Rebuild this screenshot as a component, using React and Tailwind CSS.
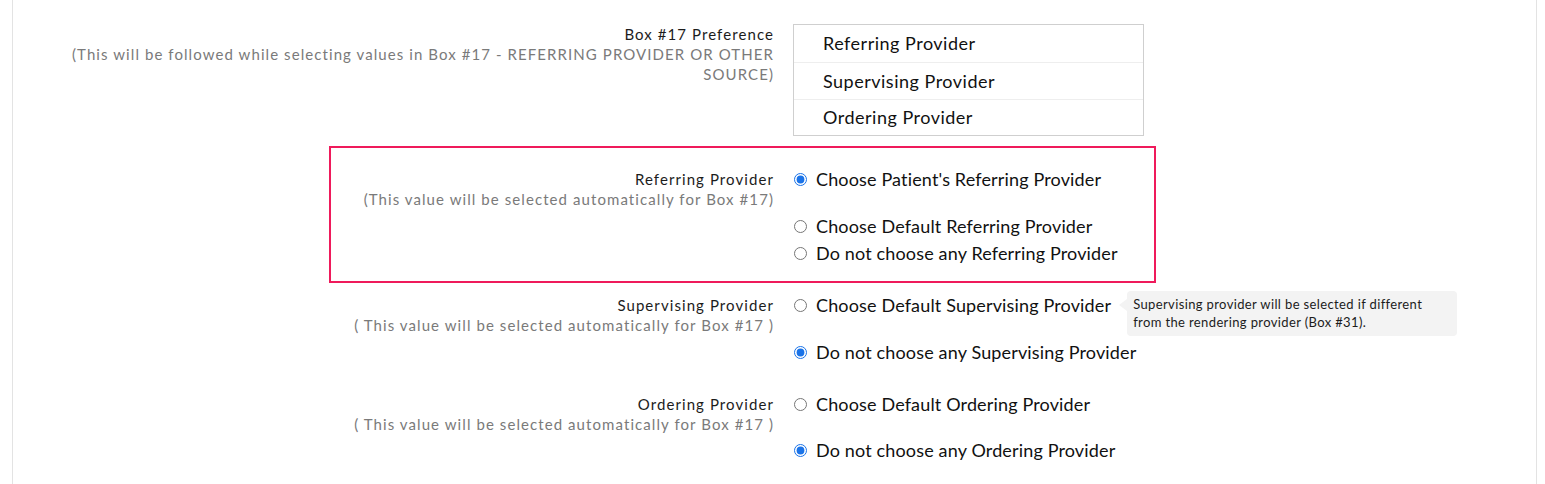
import React from 'react';

const font = { fontFamily: 'Lato, "Open Sans", sans-serif' };

const Radio = ({ checked, label, className = '', children }) => (
    <label className={`relative flex w-fit items-center gap-[9px] h-[24px] text-[18px] leading-[24px] tracking-[0.15px] text-[#111] ${className}`}>
        <input
            type="radio"
            defaultChecked={checked}
            className="m-0 w-[13px] h-[13px] accent-[#1a73e8]"
        />
        <span>{label}</span>
        {children}
    </label>
);

const Label = ({ title, note, className = '' }) => (
    <div className={`text-right text-[15px] leading-[20px] tracking-[1.08px] ${className}`}>
        <div className="text-[#1c1c1c]">{title}</div>
        <div className="text-[#7a7a7a]">{note}</div>
    </div>
);

const App = () => {
    return (
        <div style={font} className="h-[484px] overflow-hidden bg-white">
            <div className="ml-[12px] w-[1525px] h-full border-x border-[#e3e3e3] pt-[24px]">
                {/* Box #17 preference order */}
                <div className="flex items-start">
                    <Label
                        className="w-[761px] pl-[45px]"
                        title="Box #17 Preference"
                        note="(This will be followed while selecting values in Box #17 - REFERRING PROVIDER OR OTHER SOURCE)"
                    />
                    <div className="ml-[19px] w-[351px] border border-[#cfcfcf] text-[18px] tracking-[0.5px] text-[#111]">
                        <div className="h-[37px] flex items-center pl-[29px]">Referring Provider</div>
                        <div className="h-[37px] flex items-center pl-[29px] border-t border-[#eeeeee]">Supervising Provider</div>
                        <div className="h-[36px] flex items-center pl-[29px] border-t border-[#eeeeee]">Ordering Provider</div>
                    </div>
                </div>

                {/* Referring provider, highlighted */}
                <div className="mt-[10px] ml-[316px] w-[827px] border-2 border-[#ef1a5b] pt-[19px] pb-[16px] flex items-start">
                    <Label
                        className="w-[443px] pt-[2px]"
                        title="Referring Provider"
                        note="(This value will be selected automatically for Box #17)"
                    />
                    <div className="ml-[20px]">
                        <Radio checked label="Choose Patient's Referring Provider" />
                        <Radio className="mt-[23px]" label="Choose Default Referring Provider" />
                        <Radio className="mt-[3px]" label="Do not choose any Referring Provider" />
                    </div>
                </div>

                {/* Supervising provider */}
                <div className="mt-[10px] flex items-start">
                    <Label
                        className="w-[761px] pt-[2px]"
                        title="Supervising Provider"
                        note="( This value will be selected automatically for Box #17 )"
                    />
                    <div className="ml-[20px]">
                        <Radio label="Choose Default Supervising Provider">
                            <div className="absolute left-full top-[-2px] ml-[8px] flex items-start">
                                <div className="mt-[8px] w-0 h-0 border-y-[6px] border-y-transparent border-r-[8px] border-r-[#f3f3f3]" />
                                <div className="w-[330px] rounded-[4px] bg-[#f3f3f3] pl-[6px] pr-[6px] pt-[4px] pb-[5px] text-[13px] leading-[18px] tracking-[0.37px] text-[#1c1c1c] whitespace-nowrap">
                                    Supervising provider will be selected if different
                                    <br />
                                    from the rendering provider (Box #31).
                                </div>
                            </div>
                        </Radio>
                        <Radio checked className="mt-[23px]" label="Do not choose any Supervising Provider" />
                    </div>
                </div>

                {/* Ordering provider */}
                <div className="mt-[28px] flex items-start">
                    <Label
                        className="w-[761px] pt-[2px]"
                        title="Ordering Provider"
                        note="( This value will be selected automatically for Box #17 )"
                    />
                    <div className="ml-[20px]">
                        <Radio label="Choose Default Ordering Provider" />
                        <Radio checked className="mt-[22px]" label="Do not choose any Ordering Provider" />
                    </div>
                </div>
            </div>
        </div>
    );
};

export default App;
